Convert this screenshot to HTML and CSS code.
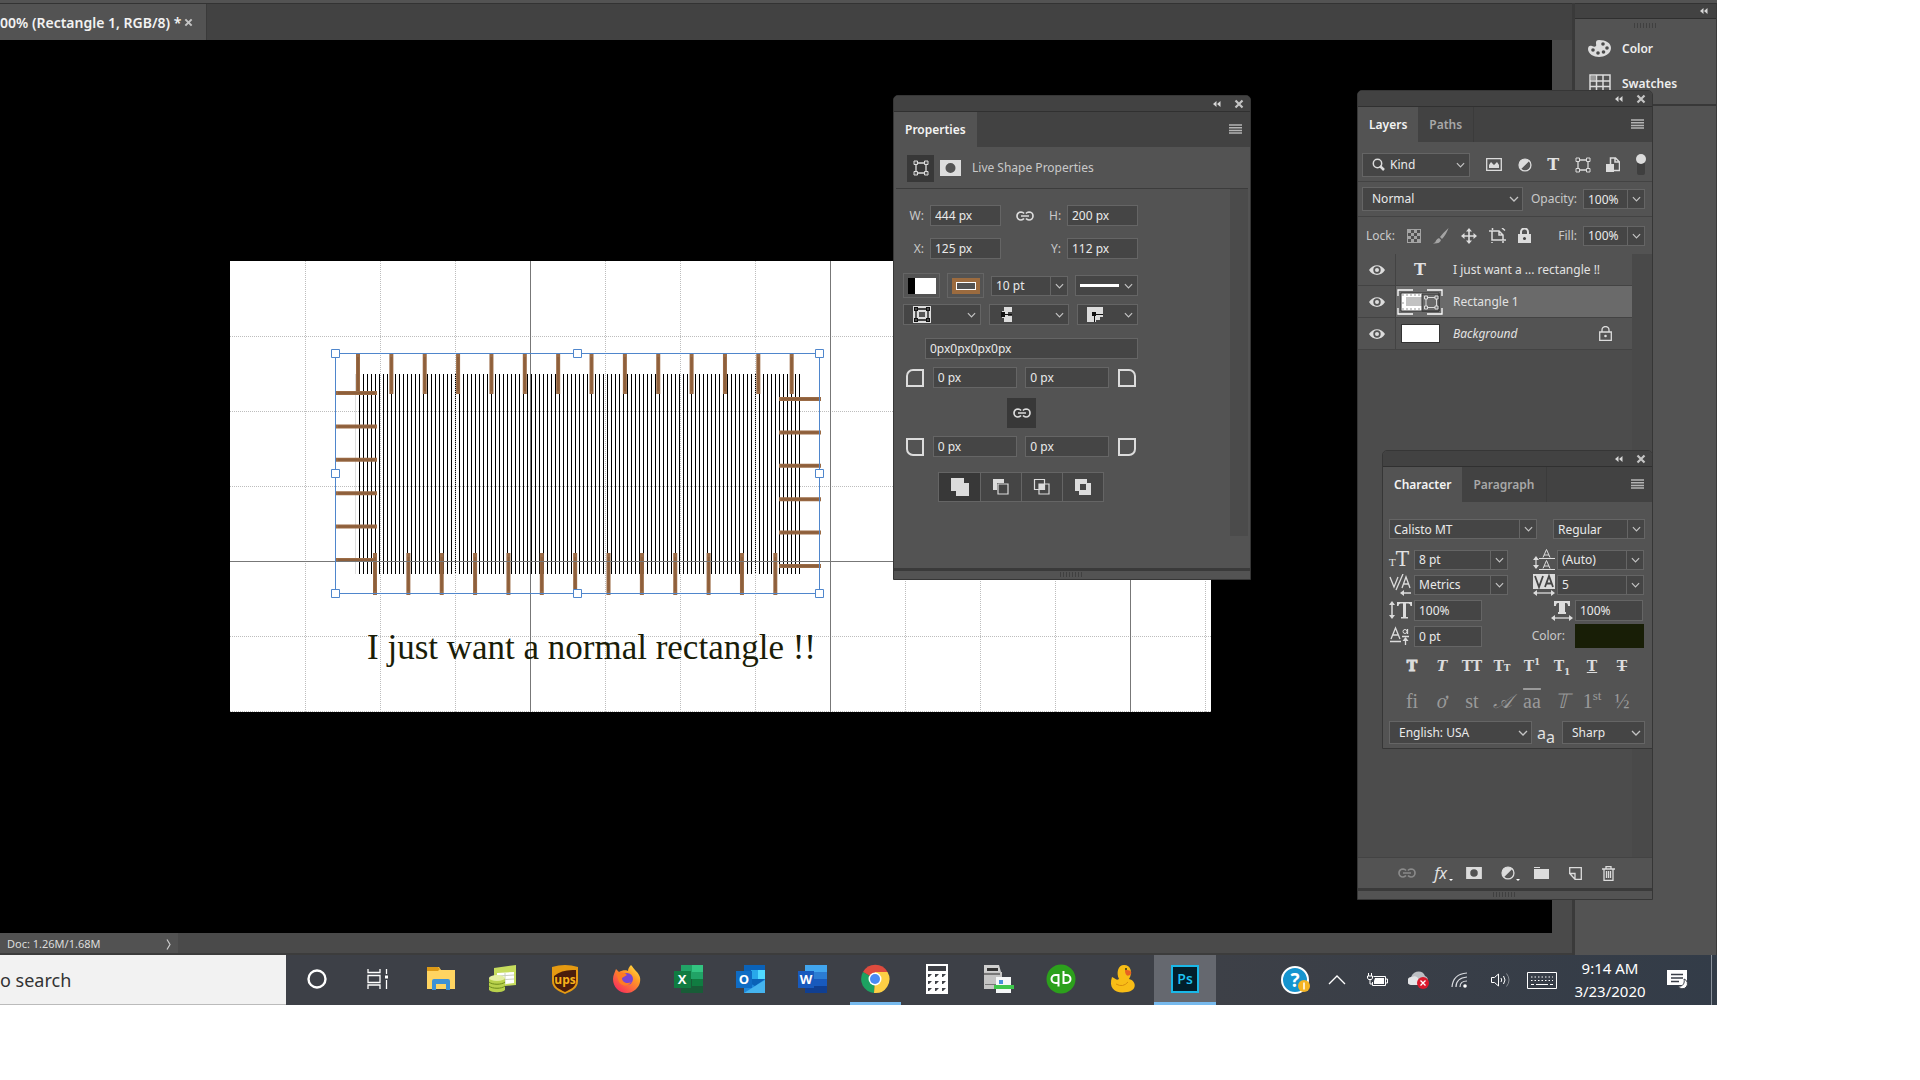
FILE: index.html
```html
<!DOCTYPE html>
<html lang="en">
<head>
<meta charset="utf-8">
<title>Rectangle 1</title>
<link rel="stylesheet" href="styles.css">
</head>
<body>
<svg class="sprite" aria-hidden="true">
  <symbol id="chev" viewBox="0 0 10 6"><path d="M1 1l4 4 4-4" fill="none" stroke="#c4c4c4" stroke-width="1.3"/></symbol>
  <symbol id="collapse" viewBox="0 0 8 6"><path d="M3.5 0v6L0 3zM7.500 0v6L4 3z" fill="#d6d6d6"/></symbol>
  <symbol id="close" viewBox="0 0 10 10"><path d="M1.500 1.500l7 7M8.500 1.500l-7 7" stroke="#c4c4c4" stroke-width="2.200"/></symbol>
  <symbol id="menu" viewBox="0 0 13 10"><path d="M0 1h13M0 3.700h13M0 6.400h13M0 9.100h13" stroke="#b4b4b4" stroke-width="1.500"/></symbol>
  <symbol id="link" viewBox="0 0 18 10"><path d="M8 2.500A4 4 0 0 0 5 1a4 4 0 0 0 0 8 4 4 0 0 0 3-1.500M10 2.500A4 4 0 0 1 13 1a4 4 0 0 1 0 8 4 4 0 0 1-3-1.500M5 5h8" fill="none" stroke="currentColor" stroke-width="1.700"/></symbol>
  <symbol id="shape" viewBox="0 0 16 16"><path d="M3 3h10v10H3z" fill="none" stroke="currentColor" stroke-width="1.300"/><path d="M1 1h3.500v3.500H1zM11.500 1H15v3.500h-3.500zM1 11.500h3.500V15H1zM11.500 11.500H15V15h-3.500z" fill="#535353" stroke="currentColor"/></symbol>
  <symbol id="mask" viewBox="0 0 21 16"><path fill-rule="evenodd" d="M0 0h21v16H0zM10.500 3a5 5 0 1 0 0 10 5 5 0 0 0 0-10z" fill="#dcdcdc"/></symbol>
  <symbol id="half" viewBox="0 0 14 14"><circle cx="7" cy="7" r="6" fill="#dcdcdc"/><path d="M11 3.200L3.200 11a5.200 5.200 0 0 0 7.800-7.800z" fill="#555"/><circle cx="7" cy="7" r="6" fill="none" stroke="#dcdcdc" stroke-width="1.200"/></symbol>
  <symbol id="eye" viewBox="0 0 16 10"><path fill-rule="evenodd" d="M0 5c4-6.500 12-6.500 16 0-4 6.500-12 6.500-16 0zM8 1.300a3.700 3.700 0 1 0 0 7.400 3.700 3.700 0 0 0 0-7.400z" fill="#dcdcdc"/><circle cx="8" cy="5" r="2" fill="#dcdcdc"/></symbol>
</svg>

<div class="desktop">
  <div class="app">
    <main class="document">
      <div class="tabbar">
        <div class="doc-tab"><span>00% (Rectangle 1, RGB/8) *</span><button class="bare" aria-label="Close document"><svg width="9" height="9"><use href="#close"/></svg></button></div>
      </div>
      <div class="stage">
        <div class="canvas">
          <svg class="artboard" width="981" height="451" viewBox="230 261 981 451">
            <path fill="#fff" d="M230 261h981v451H230z"/>
            <path d="M355.500 374v200" stroke="#ddd"/>
            <path d="M359 474h442" stroke="#000" stroke-width="200" stroke-dasharray="1 3"/>
            <g stroke="#9b6b45" fill="none">
              <path d="M356 374h438" stroke-width="40" stroke-dasharray="4 29.360"/>
              <path d="M373 574h406" stroke-width="42" stroke-dasharray="4 29.360"/>
              <path d="M356.500 391v172" stroke-width="41" stroke-dasharray="4 29.400"/>
              <path d="M800 397v172" stroke-width="42" stroke-dasharray="4 29.400"/>
            </g>
            <g stroke="#6f4526" fill="none" opacity=".3">
              <path d="M357 374h438" stroke-width="34" stroke-dasharray="2 31.360"/>
              <path d="M374 574h406" stroke-width="34" stroke-dasharray="2 31.360"/>
              <path d="M356.500 392v172" stroke-width="37" stroke-dasharray="2 31.400"/>
              <path d="M800 398v172" stroke-width="37" stroke-dasharray="2 31.400"/>
            </g>
            <path d="M305.500 261v451M380.500 261v451M455.500 261v451M605.500 261v451M680.500 261v451M755.500 261v451M905.500 261v451M980.500 261v451M1055.500 261v451M1205.500 261v451M230 336.500h981M230 411.500h981M230 486.500h981M230 636.500h981M230 711.500h981" stroke="#bdbdbd" stroke-dasharray="1 1"/>
            <path d="M530.500 261v451M830.500 261v451M1130.500 261v451M230 561.500h981" stroke="#777"/>
            <text class="art-text" x="367" y="659">I just want a normal rectangle !!</text>
            <path d="M335.500 353.500h484v240h-484z" fill="none" stroke="#4f86cc"/>
            <path d="M331.500 349.500h8v8h-8zM573.500 349.500h8v8h-8zM815.500 349.500h8v8h-8zM331.500 469.500h8v8h-8zM815.500 469.500h8v8h-8zM331.500 589.500h8v8h-8zM573.500 589.500h8v8h-8zM815.500 589.500h8v8h-8z" fill="#fff" stroke="#4f86cc"/>
          </svg>
        </div>
        <div class="vscroll"></div>
      </div>
      <div class="status">
        <div class="doc-size"><span>Doc: 1.26M/1.68M</span><svg width="5" height="11" viewBox="0 0 5 11"><path d="M1 .5l3 5-3 5" fill="none" stroke="#ccc" stroke-width="1.200"/></svg></div>
      </div>
    </main>
    <aside class="dock">
      <div class="dock-head"><svg width="8" height="6"><use href="#collapse"/></svg></div>
      <div class="dock-list">
        <i class="grip"></i>
        <button class="dock-item"><svg width="23" height="17" viewBox="0 0 23 17"><path d="M11 0c7 0 12 3 12 8 0 6-7 9-12 9S0 14 0 9c0-3 2-4 4-3s3 1 4 0-2-6 3-6z" fill="#dcdcdc"/><g fill="#4a4a4a"><circle cx="5" cy="10" r="1.800"/><circle cx="10" cy="13" r="1.800"/><circle cx="15.500" cy="12" r="1.800"/><circle cx="19" cy="8" r="1.800"/><circle cx="15" cy="4" r="1.800"/></g></svg>Color</button>
        <button class="dock-item"><svg width="23" height="19" viewBox="0 0 23 19"><path d="M2 1h20v17H2zM8.500 1v17M15 1v17M2 7h20M2 12.500h20" fill="none" stroke="#dcdcdc" stroke-width="1.500"/><path d="M3 2h5v4H3z" fill="#999"/></svg>Swatches</button>
      </div>
    </aside>
  </div>

  <footer class="taskbar">
    <input class="search" type="text" value="o search" aria-label="Search">
    <nav class="tasks">
      <button aria-label="Cortana"><svg width="30" height="30" viewBox="0 0 30 30"><circle cx="15" cy="15" r="8.500" fill="none" stroke="#fff" stroke-width="2.400"/></svg></button>
      <button aria-label="Task view"><svg width="30" height="30" viewBox="0 0 30 30"><path d="M4 5v3.500h12V5M4 25v-4h12v4M4 11.500h12v7H4zM22.500 5v5M22.500 16v9" fill="none" stroke="#fff" stroke-width="1.300"/><path d="M21 11.500h3v3h-3z" fill="#fff"/></svg></button>
      <button aria-label="File Explorer"><svg width="30" height="30" viewBox="0 0 30 30"><path d="M1 3h12l2 3h14v19H1z" fill="#ffd461"/><path d="M1 3h11l2 2-2 2H1z" fill="#dd9a17"/><path d="M6 26V17q0-2 2-2h14q2 0 2 2v9h-4v-6H10v6z" fill="#3d91d6"/></svg></button>
      <button aria-label="Database"><svg width="30" height="30" viewBox="0 0 30 30"><path d="M6 4l22-3v20l-22 2z" fill="#c6dc5d"/><path d="M9 9l17-1v11l-17 2z" fill="#fff"/><path d="M9 12l17-1M9 16l17-1M17 9v12" stroke="#c9cfbc"/><path d="M1 14v12c3 3 13 3 16 0V14z" fill="#b9d14c"/><ellipse cx="9" cy="14" rx="8" ry="3" fill="#e4efa2"/><path d="M1 18c3 3 13 3 16 0M1 22c3 3 13 3 16 0" fill="none" stroke="#6d8b1c"/></svg></button>
      <button aria-label="UPS"><svg width="30" height="30" viewBox="0 0 30 30"><path d="M2 3q13-4 26 0v14c0 7-6 10-13 13C8 27 2 24 2 17z" fill="#e59a12"/><path d="M4 12Q12 5 26 6v11c0 6-5 8-11 11C9 25 4 23 4 17z" fill="#4a1d0c"/><text x="15" y="20" text-anchor="middle" class="ico ups">ups</text></svg></button>
      <button aria-label="Firefox"><svg width="30" height="30" viewBox="0 0 30 30"><defs><linearGradient id="ff" x1="1" y1="0" x2=".2" y2="1"><stop offset="0" stop-color="#fff04a"/><stop offset=".4" stop-color="#ff9a25"/><stop offset="1" stop-color="#f7285d"/></linearGradient></defs><path d="M19 1c2 2 3 4 4 5 4 4 6 7 5 12-1 6-7 11-13 11C7 29 1 23 1 15c0-4 2-7 3-10l3 3c3-2 8-2 9-1 0-2 1-4 3-6z" fill="url(#ff)"/><circle cx="15" cy="15" r="6" fill="#7a45d1"/><path d="M4 8c4 0 8 0 11 3l-5 3c0 5 6 6 9 4-3 6-12 4-13-3z" fill="#ff7b24"/></svg></button>
      <button aria-label="Excel"><svg width="30" height="30" viewBox="0 0 30 30"><path d="M7 1h22v28H7z" fill="#21a366"/><path d="M18 1h11v7H18z" fill="#33c481"/><path d="M7 15h11v14H7z" fill="#185c37"/><path d="M18 15h11v7H18z" fill="#107c41"/><path d="M18 22h11v7H18z" fill="#185c37"/><path d="M0 7h17v17H0z" fill="#107c41"/><text x="8" y="20" text-anchor="middle" class="ico letter">X</text></svg></button>
      <button aria-label="Outlook"><svg width="30" height="30" viewBox="0 0 30 30"><path d="M8 1h21v26H8z" fill="#0a62b8"/><path d="M15 6h7v9h-7z" fill="#28a8ea"/><path d="M22 6h7v9h-7z" fill="#50d9ff"/><path d="M8 16l11 6 10-7v14H8z" fill="#1d87da"/><path d="M8 29l21-13v13z" fill="#45b4ef"/><path d="M0 7h16v17H0z" fill="#0f6cc4"/><text x="8" y="20" text-anchor="middle" class="ico letter">O</text></svg></button>
      <button aria-label="Word"><svg width="30" height="30" viewBox="0 0 30 30"><path d="M7 1h22v7H7z" fill="#41a5ee"/><path d="M7 8h22v7H7z" fill="#2b7cd3"/><path d="M7 15h22v7H7z" fill="#185abd"/><path d="M7 22h22v7H7z" fill="#103f91"/><path d="M0 7h16v17H0z" fill="#185abd"/><text x="8" y="20" text-anchor="middle" class="ico letter">W</text></svg></button>
      <button class="running" aria-label="Chrome"><svg width="30" height="30" viewBox="0 0 30 30"><path d="M15 15L3 8a14 14 0 0 1 24.500 0z" fill="#dd4b3e"/><path d="M15 15L3 8a14 14 0 0 0 11 21z" fill="#1da261"/><path d="M15 15l-1 14A14 14 0 0 0 27.500 8H15z" fill="#fdcf45"/><circle cx="15" cy="15" r="6.500" fill="#fff"/><circle cx="15" cy="15" r="5" fill="#4a8af4"/></svg></button>
      <button aria-label="Calculator"><svg width="30" height="30" viewBox="0 0 30 30"><path d="M4 0h22v30H4z" fill="#fff"/><path d="M6 2h18v5H6zM6 10h4l-3 3H6zM13 10h4l-3 3h-1zM20 10h4l-3 3h-1zM6 17h4l-3 3H6zM13 17h4l-3 3h-1zM20 17h4l-3 3h-1zM6 24h4l-3 3H6zM13 24h4l-3 3h-1zM20 24h4l-3 3h-1z" fill="#3e4046"/></svg></button>
      <button aria-label="Scanner"><svg width="30" height="30" viewBox="0 0 30 30"><path d="M0 1h15l2 7H0z" fill="#cfcfcf"/><path d="M3 4h11v3H3z" fill="#333"/><path d="M0 8h18v17H0z" fill="#c4c4c4"/><path d="M0 9h16v2H0zM1 20h12v1H1z" fill="#777"/><path d="M12 13h15v16H12z" fill="#f4f6f7"/><path d="M15 16h4v4h-4z" fill="#4690d8"/><path d="M10 21h20v4H10z" fill="#3fc74c"/></svg></button>
      <button aria-label="QuickBooks"><svg width="30" height="30" viewBox="0 0 30 30"><circle cx="15" cy="15" r="14.500" fill="#2ca01c"/><path d="M12.500 22.500V11H9.500a4 4 0 0 0 0 8h2M17.500 7v12H20.500a4 4 0 0 0 0-8h-2" fill="none" stroke="#fff" stroke-width="2"/></svg></button>
      <button aria-label="Cyberduck"><svg width="30" height="30" viewBox="0 0 30 30"><path d="M4 13c3 1 4 4 7 2-3-6-1-14 5-14 7 0 9 8 5 14 8 2 8 12-2 13-11 2-19-3-15-15z" fill="#f8bd16"/><path d="M17 6c5 0 7 1 6 4-3 3-6 2-6-4z" fill="#e66122"/><circle cx="18" cy="5" r="1" fill="#331"/><path d="M8 20q7 4 12-2" fill="none" stroke="#d88d0c"/></svg></button>
      <button class="current" aria-label="Photoshop"><svg width="30" height="30" viewBox="0 0 30 30"><path d="M2 2h26v26H2z" fill="#021e2b" stroke="#1ab8e8" stroke-width="2"/><text x="15" y="20" text-anchor="middle" class="ico ps">Ps</text></svg></button>
    </nav>
    <div class="tray">
      <button aria-label="Help"><svg width="30" height="28" viewBox="0 0 30 28"><circle cx="14" cy="14" r="13" fill="#1594cf" stroke="#fff" stroke-width="2"/><text x="14" y="21" text-anchor="middle" class="ico help">?</text><circle cx="23" cy="20" r="6" fill="#f4b424"/><path d="M23 16.500v7" stroke="#fff" stroke-width="1.500"/></svg></button>
      <button aria-label="Show hidden icons"><svg width="18" height="10" viewBox="0 0 18 10"><path d="M1 9l8-8 8 8" fill="none" stroke="#fff" stroke-width="1.300"/></svg></button>
      <button aria-label="Battery"><svg width="21" height="14" viewBox="0 0 21 14"><path d="M6.500 3.500h12v9h-13V9M19 6h1.500v4H19" fill="none" stroke="#fff"/><path d="M8 5h9v6H7V8z" fill="#fff"/><path d="M1.500 0v3M4.500 0v3M.5 3h5v2l-1 1.500h-3L.5 5zM3 7v4h2" fill="none" stroke="#fff"/></svg></button>
      <button aria-label="OneDrive"><svg width="22" height="18" viewBox="0 0 22 18"><path d="M3 14a5 5 0 0 1 0-8C6-1 15-1 17 5c4 1 4 8 0 9z" fill="#bcbfc3"/><path d="M3 14a4 4 0 0 1 1-8c3-2 6 0 7 3l6 5z" fill="#e4e5e7"/><circle cx="15" cy="12" r="6" fill="#d9192b"/><path d="M12.500 9.500l5 5M17.500 9.500l-5 5" stroke="#fff" stroke-width="1.300"/></svg></button>
      <button aria-label="Wi-Fi"><svg width="18" height="17" viewBox="0 0 18 17"><path d="M1 15Q2 2 16 1M5 15Q5 6 16 5M9 15q0-6 7-6" fill="none" stroke="#dadce0" stroke-width="1.200"/><circle cx="14" cy="14" r="1.800" fill="#fff"/></svg></button>
      <button aria-label="Volume"><svg width="20" height="16" viewBox="0 0 20 16"><path d="M.5 5.500h3L7.500 2v12l-4-3.500h-3zM10 6q1.500 2 0 4M12.500 4q3 4 0 8" fill="none" stroke="#fff"/><path d="M15.500 1.500q5 6.500 0 13" fill="none" stroke="#888c92"/></svg></button>
      <button aria-label="Touch keyboard"><svg width="30" height="17" viewBox="0 0 30 17"><path d="M.5.5h29v16H.5z" fill="none" stroke="#fff"/><path d="M4 5h22M4 8.500h22" stroke="#fff" stroke-dasharray="1.500 2"/><path d="M4 12.500h3M9 12.500h12M23 12.500h3" stroke="#fff"/></svg></button>
      <div class="clock"><span>9:14 AM</span><span>3/23/2020</span></div>
      <button class="action" aria-label="Action center"><svg width="21" height="20" viewBox="0 0 21 20"><path d="M0 0h20v15H5l-5 0z" fill="#fff"/><path d="M4 4.500h12M4 8h12M4 11.500h8" stroke="#3a3f48" stroke-width="1.400"/><path d="M17 9a5 5 0 1 1-6 7c5 1 7-3 6-7z" fill="#fff" stroke="#3a3f48"/></svg></button>
      <i class="peek"></i>
    </div>
  </footer>

  <section class="panel properties">
    <div class="panel-head"><svg width="8" height="6"><use href="#collapse"/></svg><button class="bare" aria-label="Close"><svg width="10" height="10"><use href="#close"/></svg></button></div>
    <div class="panel-tabs"><button class="on">Properties</button><svg class="menu" width="13" height="10"><use href="#menu"/></svg></div>
    <div class="prop-title"><button class="pressed" aria-label="Shape"><svg width="16" height="16"><use href="#shape"/></svg></button><svg width="21" height="16"><use href="#mask"/></svg><span>Live Shape Properties</span></div>
    <div class="prop-body">
      <div class="fields">
        <div class="dims">
          <label for="w">W:</label><input id="w" value="444 px"><svg class="lit" width="18" height="10"><use href="#link"/></svg><label for="h">H:</label><input id="h" value="200 px">
          <label for="x">X:</label><input id="x" value="125 px"><i></i><label for="y">Y:</label><input id="y" value="112 px">
        </div>
        <div class="strokes">
          <button class="paint" aria-label="Fill"><i class="fill"></i></button>
          <button class="paint" aria-label="Stroke"><i class="stroke"><b></b></i></button>
          <div class="combo size"><input value="10 pt" aria-label="Stroke width"><button aria-label="Widths"><svg width="9" height="6"><use href="#chev"/></svg></button></div>
          <button class="drop line" aria-label="Stroke type"><i></i><svg width="9" height="6"><use href="#chev"/></svg></button>
        </div>
        <div class="caps">
          <button class="drop" aria-label="Align"><svg width="18" height="17" viewBox="0 0 18 17"><path d="M0 0h18v17H0z" fill="#dcdcdc"/><path d="M3 3h12v11H3z" fill="none" stroke="#111" stroke-width="1.300"/><path d="M1 1h4v4H1zM13 1h4v4h-4zM1 12h4v4H1zM13 12h4v4h-4z" fill="#111"/><path d="M2.500 2.500h1v1h-1zM14.500 2.500h1v1h-1zM2.500 13.500h1v1h-1zM14.500 13.500h1v1h-1z" fill="#fff"/><path d="M6 6h6v5H6z" fill="#555"/></svg><svg width="9" height="6"><use href="#chev"/></svg></button>
          <button class="drop" aria-label="Caps"><svg width="14" height="15" viewBox="0 0 14 15"><path d="M5 0h8v5H9v4h4v6H5v-4H3V4h2z" fill="#dcdcdc"/><path d="M2 5h4v5H2zM6 7h7v1H6z" fill="#111"/></svg><svg width="9" height="6"><use href="#chev"/></svg></button>
          <button class="drop" aria-label="Corners"><svg width="16" height="15" viewBox="0 0 16 15"><path d="M0 0h16v10h-3v3H9v2H0z" fill="#dcdcdc"/><path d="M5 5h4v4H5zM7 7h9v1H7zM7 7h1v8H7z" fill="#111"/></svg><svg width="9" height="6"><use href="#chev"/></svg></button>
        </div>
        <input class="radii" value="0px0px0px0px" aria-label="Corner radii">
        <div class="corners first"><i class="tl"></i><input value="0 px" aria-label="Top left"><input value="0 px" aria-label="Top right"><i class="tr"></i></div>
        <button class="pressed chain lit" aria-label="Link radii"><svg width="18" height="10"><use href="#link"/></svg></button>
        <div class="corners"><i class="bl"></i><input value="0 px" aria-label="Bottom left"><input value="0 px" aria-label="Bottom right"><i class="br"></i></div>
        <div class="ops">
          <button class="on" aria-label="Combine"><svg width="18" height="18" viewBox="0 0 18 18"><path d="M0 0h13v5h5v13H5v-5H0z" fill="#dcdcdc"/></svg></button>
          <button aria-label="Subtract"><svg width="18" height="18" viewBox="0 0 18 18"><path d="M1 1h11v4H5v7H1z" fill="#dcdcdc"/><path d="M6 6h10v10H6z" fill="none" stroke="#dcdcdc" stroke-width="1.200"/></svg></button>
          <button aria-label="Intersect"><svg width="18" height="18" viewBox="0 0 18 18"><path d="M1.500 1.500h10v10h-10zM6 6h10v10H6z" fill="none" stroke="#dcdcdc" stroke-width="1.200"/><path d="M6 6h6v6H6z" fill="#dcdcdc"/></svg></button>
          <button aria-label="Exclude"><svg width="18" height="18" viewBox="0 0 18 18"><path fill-rule="evenodd" d="M1 1h12v4h4v12H5v-4H1zM6 6v6h6V6z" fill="#dcdcdc"/></svg></button>
        </div>
      </div>
      <div class="pscroll"></div>
    </div>
    <div class="panel-foot"><i class="grip"></i></div>
  </section>

  <section class="panel layers">
    <div class="panel-head"><svg width="8" height="6"><use href="#collapse"/></svg><button class="bare" aria-label="Close"><svg width="10" height="10"><use href="#close"/></svg></button></div>
    <div class="panel-tabs"><button class="on">Layers</button><button>Paths</button><svg class="menu" width="13" height="10"><use href="#menu"/></svg></div>
    <div class="filter">
      <button class="drop kind"><svg width="13" height="13" viewBox="0 0 13 13"><circle cx="5.500" cy="5.500" r="4.200" fill="none" stroke="#dcdcdc" stroke-width="1.500"/><path d="M8 8l4 4" stroke="#dcdcdc" stroke-width="2.500"/></svg><span>Kind</span><svg width="9" height="6"><use href="#chev"/></svg></button>
      <div class="filter-icons">
        <svg width="16" height="13" viewBox="0 0 16 13"><path d="M.7.7h14.600v11.600H.7z" fill="none" stroke="#dcdcdc" stroke-width="1.300"/><path d="M3 10V7l2-3 3 3 3-3 2 3v3z" fill="#dcdcdc"/></svg>
        <svg width="14" height="14"><use href="#half"/></svg>
        <b class="serif">T</b>
        <svg class="lit" width="16" height="16"><use href="#shape"/></svg>
        <svg width="14" height="15" viewBox="0 0 14 15"><path d="M4.500 7V1h5l4 4v8.500H8M9 1v4h4" fill="none" stroke="#dcdcdc" stroke-width="1.500"/><path d="M0 7h8v8H0z" fill="#dcdcdc"/></svg>
        <svg width="10" height="22" viewBox="0 0 10 22"><path d="M1 4h8v15q0 2-2 2H3q-2 0-2-2z" fill="#3f3f3f"/><circle cx="5" cy="5" r="5" fill="#dcdcdc"/></svg>
      </div>
    </div>
    <div class="blend">
      <select aria-label="Blend mode"><option>Normal</option></select>
      <label for="op">Opacity:</label><div class="combo pct"><input id="op" value="100%"><button aria-label="Opacity slider"><svg width="9" height="6"><use href="#chev"/></svg></button></div>
    </div>
    <div class="lock">
      <span>Lock:</span>
      <div class="lock-icons">
        <svg width="14" height="14" viewBox="0 0 14 14"><path d="M0 0h14v14H0z" fill="#a4a4a4"/><path d="M4 1h3v3H4zM10 1h3v3h-3zM1 4h3v3H1zM7 4h3v3H7zM4 7h3v3H4zM10 7h3v3h-3zM1 10h3v3H1zM7 10h3v3H7z" fill="#505050"/></svg>
        <svg width="16" height="16" viewBox="0 0 16 16"><path d="M15.500 0Q10 5 7 9l2 2q4-4 6.500-11zM6 10l2 2q-1 4-8 3.500 3-1 3-3 1-2 3-2.500z" fill="#a4a4a4"/></svg>
        <svg width="16" height="16" viewBox="0 0 16 16"><path d="M8 2v12M2 8h12" stroke="#dcdcdc" stroke-width="1.600"/><path d="M8 0l3 3.500H5zM8 16l3-3.500H5zM0 8l3.500-3v6zM16 8l-3.500-3v6z" fill="#dcdcdc"/></svg>
        <svg width="17" height="15" viewBox="0 0 17 15"><path d="M3.500 0v2M0 3h10l4 4v5M3 3v9h14M14 13v2M3 14v1M10 3v4h4M13 0l3 2.500" fill="none" stroke="#dcdcdc" stroke-width="1.500"/></svg>
        <svg width="13" height="15" viewBox="0 0 13 15"><path d="M3 7V4a3.500 3.500 0 0 1 7 0v3" fill="none" stroke="#dcdcdc" stroke-width="2"/><path d="M0 6h13v9H0z" fill="#dcdcdc"/><circle cx="6.500" cy="10.500" r="1.500" fill="#444"/></svg>
      </div>
      <label for="fl">Fill:</label><div class="combo pct"><input id="fl" value="100%"><button aria-label="Fill slider"><svg width="9" height="6"><use href="#chev"/></svg></button></div>
    </div>
    <div class="layer-area">
      <div class="layer-list">
        <div class="layer"><div class="vis"><svg width="16" height="10"><use href="#eye"/></svg></div><div class="thumb"><b class="serif">T</b></div><span>I just want a ... rectangle !!</span></div>
        <div class="layer sel"><div class="vis"><svg width="16" height="10"><use href="#eye"/></svg></div><div class="thumb"><svg width="46" height="26" viewBox="0 0 46 26"><path d="M1 7V1h15M30 1h15v6M1 19v6h15M30 25h15v-6" fill="none" stroke="#fff" stroke-width="1.300"/><path d="M4 4h38v18H4z" fill="#fff" stroke="#333"/><path d="M5 6h20M5 14h20M5 20h20" stroke="#ccc" stroke-width="2" stroke-dasharray="2 2"/><path d="M9 8h16v9H9z" fill="#c2c2c2"/><path d="M25 5h17v17H25z" fill="#6a6a6a" stroke="#333"/><path d="M29 8.500h10.500v10H29z" fill="none" stroke="#dcdcdc"/><path d="M27.500 7h3v3h-3zM38 7h3v3h-3zM27.500 17h3v3h-3zM38 17h3v3h-3z" fill="#6a6a6a" stroke="#dcdcdc"/></svg></div><span>Rectangle 1</span></div>
        <div class="layer"><div class="vis"><svg width="16" height="10"><use href="#eye"/></svg></div><div class="thumb"><i class="blank"></i></div><em>Background</em><svg width="13" height="15" viewBox="0 0 13 15"><path d="M3 6V4a3.500 3.500 0 0 1 7 0v2M.7 6h11.600v8.300H.7z" fill="none" stroke="#dcdcdc" stroke-width="1.300"/><circle cx="6.500" cy="10" r="1.300" fill="#dcdcdc"/></svg></div>
      </div>
      <div class="lscroll"></div>
    </div>
    <div class="layer-tools">
      <button class="dim" aria-label="Link layers"><svg width="18" height="10"><use href="#link"/></svg></button>
      <button class="fx" aria-label="Effects">fx<i class="dot"></i></button>
      <button aria-label="Mask"><svg width="16" height="12"><use href="#mask"/></svg></button>
      <button aria-label="Adjustment"><svg width="14" height="14"><use href="#half"/></svg><i class="dot"></i></button>
      <button aria-label="Group"><svg width="15" height="12" viewBox="0 0 15 12"><path d="M0 0h6v1H0zM0 2h15v10H0z" fill="#dcdcdc"/></svg></button>
      <button aria-label="New layer"><svg width="13" height="13" viewBox="0 0 13 13"><path d="M.7 7V.7h11.600v11.600H6" fill="none" stroke="#dcdcdc" stroke-width="1.300"/><path d="M.7 6.500H6v5.800z" fill="none" stroke="#dcdcdc" stroke-width="1.300"/></svg></button>
      <button aria-label="Delete"><svg width="13" height="15" viewBox="0 0 13 15"><path d="M0 3h13M4 2.500V.7h5v1.800M2 3v11.300h9V3M4.500 5v7M6.500 5v7M8.500 5v7" fill="none" stroke="#dcdcdc" stroke-width="1.300"/></svg></button>
    </div>
    <div class="panel-foot"><i class="grip"></i></div>
  </section>

  <section class="panel character">
    <div class="panel-head"><svg width="8" height="6"><use href="#collapse"/></svg><button class="bare" aria-label="Close"><svg width="10" height="10"><use href="#close"/></svg></button></div>
    <div class="panel-tabs"><button class="on">Character</button><button>Paragraph</button><svg class="menu" width="13" height="10"><use href="#menu"/></svg></div>
    <div class="char-body">
      <div class="font-row">
        <div class="combo"><input value="Calisto MT" aria-label="Font"><button aria-label="Fonts"><svg width="9" height="6"><use href="#chev"/></svg></button></div>
        <div class="combo"><input value="Regular" aria-label="Style"><button aria-label="Styles"><svg width="9" height="6"><use href="#chev"/></svg></button></div>
      </div>
      <div class="metric-row">
        <span class="sym"><small class="serif">T</small><span class="serif big">T</span></span>
        <div class="combo"><input value="8 pt" aria-label="Size"><button aria-label="Sizes"><svg width="9" height="6"><use href="#chev"/></svg></button></div>
        <svg width="22" height="22" viewBox="0 0 22 22"><path d="M3 9v10M6 9.500h16M6 20.500h16" stroke="#dcdcdc" stroke-width="1.200"/><path d="M3 7l3 4H0zM3 20l3-4H0z" fill="#dcdcdc"/><path d="M10 8.500L13.500.5l3.500 8M11 6h5M10 19.500l3.500-8 3.500 8M11 17h5" fill="none" stroke="#dcdcdc"/></svg>
        <div class="combo"><input value="(Auto)" aria-label="Leading"><button aria-label="Leadings"><svg width="9" height="6"><use href="#chev"/></svg></button></div>
      </div>
      <div class="metric-row">
        <svg width="23" height="22" viewBox="0 0 23 22"><path d="M1 3l4 10L9 3M14 0L7 16M13 14l4-11 4 11M14 10h6" fill="none" stroke="#dcdcdc" stroke-width="1.300"/><path d="M13 19h9" stroke="#dcdcdc" stroke-width="1.500"/><path d="M11 19l4-3v6z" fill="#dcdcdc"/></svg>
        <div class="combo"><input value="Metrics" aria-label="Kerning"><button aria-label="Kernings"><svg width="9" height="6"><use href="#chev"/></svg></button></div>
        <svg width="22" height="22" viewBox="0 0 22 22"><path d="M0 0h22v15H0z" fill="#dcdcdc"/><path d="M2 2l4 11 4-11M12 13l4-11 4 11M13 9.500h6" fill="none" stroke="#444" stroke-width="1.800"/><path d="M3 19h16" stroke="#dcdcdc" stroke-width="1.300"/><path d="M0 19l4-3v6zM22 19l-4-3v6z" fill="#dcdcdc"/></svg>
        <div class="combo"><input value="5" aria-label="Tracking"><button aria-label="Trackings"><svg width="9" height="6"><use href="#chev"/></svg></button></div>
      </div>
      <div class="metric-row scale">
        <svg width="23" height="20" viewBox="0 0 23 20"><path d="M3 4v12" stroke="#dcdcdc" stroke-width="1.500"/><path d="M3 1l3 4H0zM3 19l3-4H0zM8 2h15v4h-1.500q0-2.500-2-2.500H17V17h2v1.500h-7V17h2V3.500h-2.500q-2 0-2 2.500H8z" fill="#dcdcdc"/></svg>
        <input value="100%" aria-label="Vertical scale">
        <svg width="22" height="21" viewBox="0 0 22 21"><path d="M3 1h16v5h-2q0-3-2-3h-1v9h1v2H7v-2h1V3H7Q5 3 5 6H3z" fill="#dcdcdc"/><path d="M3 18h16" stroke="#dcdcdc" stroke-width="1.300"/><path d="M0 18l4-3v6zM22 18l-4-3v6z" fill="#dcdcdc"/></svg>
        <input value="100%" aria-label="Horizontal scale">
      </div>
      <div class="metric-row scale">
        <svg width="23" height="20" viewBox="0 0 23 20"><path d="M2 13L6.500 2 11 13M3.500 9h6M1 15.500h11M13 10.500h7" fill="none" stroke="#dcdcdc" stroke-width="1.300"/><circle cx="16" cy="5.500" r="2" fill="none" stroke="#dcdcdc"/><path d="M18.500 3v5M16.500 13v6" stroke="#dcdcdc" stroke-width="1.300"/><path d="M16.500 11l3 4h-6z" fill="#dcdcdc"/></svg>
        <input value="0 pt" aria-label="Baseline shift">
        <label for="tc">Color:</label>
        <button id="tc" class="swatch" aria-label="Text color"></button>
      </div>
      <div class="glyphs"><button><b class="heavy">T</b></button><button><em>T</em></button><button>TT</button><button>T<small>T</small></button><button>T<sup>1</sup></button><button>T<sub>1</sub></button><button><u>T</u></button><button><s>T</s></button></div>
      <div class="glyphs off"><button>fi</button><button><em>ơ</em></button><button>st</button><button><em>𝒜</em></button><button><span class="over">aa</span></button><button><em>𝕋</em></button><button>1<sup>st</sup></button><button>½</button></div>
      <div class="lang-row"><select aria-label="Language"><option>English: USA</option></select><span class="aa"><span>a</span><sub>a</sub></span><select aria-label="Anti-aliasing"><option>Sharp</option></select></div>
    </div>
  </section>
</div>
</body>
</html>
```
FILE: styles.css
```css
* { box-sizing: border-box; }
body { margin: 0; background: #fff; color: #e2e2e2; font: 12px/16px "Noto Sans", "Open Sans", sans-serif; }
button, input, select { font: inherit; color: inherit; border: 0; border-radius: 0; padding: 0; margin: 0; background: none; min-width: 0; outline: 0; }
svg { display: block; flex: none; }
.sprite { display: none; }
button { display: flex; align-items: center; justify-content: center; }
.serif { font-family: "DejaVu Serif", serif; }
.lit { color: #dcdcdc; }

.desktop { position: relative; display: flex; flex-direction: column; height: calc(100vh - 75px); min-height: 930px; margin-right: 203px; overflow: hidden; }
.app { flex: 1; display: flex; min-height: 0; border-top: 3px solid #535353; background: #535353; }
.document { flex: 1; display: flex; flex-direction: column; min-width: 0; border-right: 3px solid #3a3a3a; }
.tabbar { height: 37px; display: flex; background: #424242; border-top: 1px solid #333; }
.doc-tab { width: 207px; display: flex; gap: 3px; padding-top: 11px; background: #535353; border-right: 1px solid #3a3a3a; font-weight: 600; font-size: 14px; color: #f2f2f2; white-space: nowrap; }
.doc-tab button { height: 14px; }
.stage { flex: 1; display: flex; min-height: 0; }
.canvas { flex: 1; background: #000; padding: 221px 0 0 230px; overflow: hidden; }
.art-text { font: 35px "Liberation Serif", serif; fill: #1a1d08; }
.vscroll { width: 20px; background: #4a4a4a; }
.status { height: 22px; background: #4a4a4a; border-bottom: 2px solid #3c3c3c; }
.doc-size { width: 178px; height: 20px; display: flex; align-items: center; justify-content: space-between; padding: 2px 7px 0 7px; background: #525252; font-size: 11px; color: #ddd; }

.dock { width: 142px; border-top: 1px solid #333; border-right: 1px solid #3a3a3a; }
.dock-head { height: 15px; display: flex; align-items: center; justify-content: flex-end; padding-right: 8px; background: #424242; border-bottom: 1px solid #2f2f2f; }
.dock-list { height: 87px; display: flex; flex-direction: column; gap: 16px; padding: 4px 13px 0; border-bottom: 2px solid #383838; }
.dock-item { height: 19px; justify-content: flex-start; gap: 11px; font-weight: 600; color: #eee; }
.grip { display: block; width: 24px; height: 5px; margin: 0 auto; background: repeating-linear-gradient(90deg, #404040 0 1px, #535353 1px 3px); }
.dock .grip { margin-bottom: -5px; }

.taskbar { height: 50px; display: flex; background: #3d4047; }
.search { width: 286px; background: #f2f2f2; color: #333; font-size: 18px; border-bottom: 1px solid #bbb; }
.tasks { display: flex; }
.tasks button { width: 62px; border-bottom: 3px solid transparent; }
.tasks .running { background: linear-gradient(#76b9ed, #76b9ed) center bottom / 51px 3px no-repeat border-box; }
.tasks .current { background: #65686f; border-color: #76b9ed; }
.ico { font-family: "Open Sans", sans-serif; font-weight: 700; fill: #fff; }
.ups { font-size: 12px; fill: #f6b21b; }
.letter { font-size: 13px; }
.ps { font-size: 14px; font-weight: 600; fill: #1ec3f4; }
.help { font-size: 19px; }
.tray { flex: 1; display: flex; align-items: stretch; justify-content: flex-end; background: linear-gradient(90deg, #3d4047, #333c48); }
.tray button { width: 41px; }
.clock { width: 96px; display: flex; flex-direction: column; align-items: center; justify-content: center; font-size: 15px; line-height: 23px; color: #fff; }
.tray .action { width: 38px; }
.peek { width: 1px; margin: 0 5px 0 15px; background: #8b929c; }

.panel { position: absolute; display: flex; flex-direction: column; background: #535353; border: 1px solid #363636; border-radius: 5px 5px 0 0; overflow: hidden; }
.panel-head { height: 16px; flex: none; display: flex; align-items: center; justify-content: flex-end; gap: 13px; padding-right: 6px; background: #424242; border-bottom: 1px solid #303030; }
.panel-tabs { height: 35px; flex: none; display: flex; background: #424242; }
.panel-tabs button { padding: 0 11px; color: #a8a8a8; font-weight: 600; border-right: 1px solid #3b3b3b; }
.panel-tabs .on { background: #535353; color: #f4f4f4; border: 0; }
.menu { margin: 12px 8px 0 auto; }
.panel-foot { height: 11px; flex: none; border-top: 3px solid #3a3a3a; padding-top: 1px; }
.panel input, .panel select, .drop { height: 21px; background: #454545; border: 1px solid #656565; padding: 0 4px; color: #eaeaea; }
.panel select { appearance: none; background: #454545 url("data:image/svg+xml,%3Csvg xmlns='http://www.w3.org/2000/svg' width='10' height='6'%3E%3Cpath d='M1 1l4 4 4-4' fill='none' stroke='%23c4c4c4' stroke-width='1.3'/%3E%3C/svg%3E") no-repeat right 3px center; }
.combo { display: flex; height: 20px; border: 1px solid #656565; background: #454545; }
.panel .combo input { flex: 1; height: 18px; border: 0; background: none; }
.combo button { width: 17px; border-left: 1px solid #656565; }
.drop { justify-content: space-between; }
.pressed { background: #383838; }

.properties { left: 893px; top: 95px; width: 358px; height: 485px; }
.prop-title { height: 42px; flex: none; display: flex; align-items: center; gap: 6px; margin: 0 2px; padding: 1px 0 0 11px; border-bottom: 1px solid #3c3c3c; color: #c9c9c9; }
.prop-title button { width: 27px; height: 27px; color: #dcdcdc; }
.prop-title span { padding-left: 5px; }
.prop-body { flex: 1; display: flex; justify-content: space-between; padding: 0 2px 0 9px; }
.pscroll { width: 18px; margin-bottom: 32px; background: #4b4b4b; }
.fields { width: 235px; padding-top: 16px; display: flex; flex-direction: column; align-items: stretch; }
.dims { display: grid; grid-template-columns: 18px 71px 36px 12px 71px; gap: 12px 6px; align-items: center; justify-content: end; color: #c9c9c9; }
.dims svg { justify-self: center; }
.dims label { text-align: right; white-space: nowrap; }
.panel .dims input { width: 71px; }
.strokes { display: flex; justify-content: space-between; align-items: center; margin-top: 14px; }
.paint { width: 37px; height: 25px; border: 1px solid #656565; }
.paint i { width: 28px; height: 16px; }
.fill { background: linear-gradient(90deg, #000 25%, #fff 25%); }
.stroke { background: #9b6b3f; padding: 4px; }
.stroke b { display: block; height: 8px; border: 1px solid #fff; background: #535353; }
.size { width: 77px; }
.line { width: 63px; }
.line i { width: 39px; height: 3px; background: #fff; }
.caps { display: grid; grid-template-columns: 78px 80px 61px; gap: 8px; margin-top: 6px; }
.caps .drop { padding-left: 9px; }
.panel .radii { width: 213px; margin: 13px 0 8px auto; }
.corners { display: grid; grid-template-columns: 18px 84px 84px 18px; justify-content: space-between; align-items: center; padding: 0 2px 0 3px; }
.corners i { width: 18px; height: 18px; border: 2px solid #dcdcdc; }
.tl { border-top-left-radius: 7px; }
.tr { border-top-right-radius: 7px; }
.bl { border-bottom-left-radius: 7px; }
.br { border-bottom-right-radius: 7px; }
.chain { width: 29px; height: 30px; margin: 10px 0 8px 104px; }
.ops { display: flex; align-self: flex-start; margin: 15px 0 0 35px; border: 1px solid #656565; }
.ops button { width: 41px; height: 28px; background: #454545; border-left: 1px solid #656565; }
.ops .on { background: #383838; border: 0; }

.layers { right: 64px; top: 90px; bottom: 105px; width: 296px; }
.filter { height: 40px; display: flex; align-items: center; gap: 16px; padding: 6px 6px 0 4px; border-bottom: 1px solid #434343; }
.kind { width: 108px; height: 24px; padding: 0 4px 0 9px; gap: 5px; }
.kind span { flex: 1; text-align: left; }
.filter-icons { flex: 1; display: flex; align-items: center; justify-content: space-between; }
.filter-icons b { font-size: 16px; }
.blend, .lock { height: 35px; display: flex; align-items: center; gap: 6px; padding: 0 7px 0 4px; color: #c9c9c9; }
.blend { border-bottom: 1px solid #434343; }
.panel .blend select { width: 161px; height: 24px; padding: 0 9px; }
.blend label, .lock label { margin-left: auto; }
.pct { width: 62px; color: #eee; }
.lock { height: 37px; padding-left: 8px; }
.lock-icons { display: flex; align-items: center; gap: 12px; padding-left: 6px; }
.layer-area { flex: 1; display: flex; background: #4c4c4c; }
.layer-list { flex: 1; }
.lscroll { width: 20px; background: #494949; }
.layer { height: 32px; display: flex; align-items: center; background: #535353; border-bottom: 1px solid #434343; }
.layer > svg { margin: 0 20px 0 auto; }
.vis { width: 38px; height: 100%; display: flex; align-items: center; justify-content: center; background: #535353; border-right: 1px solid #434343; }
.sel { background: #6a6a6a; }
.thumb { width: 57px; display: flex; justify-content: center; padding-right: 9px; }
.thumb b { font-size: 16px; }
.blank { width: 39px; height: 19px; background: #fff; border: 1px solid #333; }
.layer-tools { height: 31px; display: flex; justify-content: space-between; padding: 0 27px 0 33px; border-top: 1px solid #434343; }
.layer-tools button { position: relative; width: 32px; }
.dim { color: #8a8a8a; }
.layer-tools .fx { font: italic 16px/16px "Noto Sans", sans-serif; }
.dot { position: absolute; right: 4px; bottom: 5px; border: 2px solid transparent; border-top-color: #fff; }

.character { right: 64px; top: 450px; width: 271px; }
.char-body { padding: 17px 7px 4px 6px; display: flex; flex-direction: column; }
.font-row { display: grid; grid-template-columns: 148px 92px; justify-content: space-between; margin-bottom: 8px; }
.metric-row { display: grid; grid-template-columns: 23px 94px 45px 87px; column-gap: 2px; align-items: center; height: 25px; }
.metric-row > :nth-child(3) { justify-self: end; }
.scale { grid-template-columns: 23px 68px 89px 68px; height: 26px; }
.scale label { color: #c9c9c9; padding-right: 8px; }
.sym { display: flex; align-items: baseline; }
.sym small { font-size: 10px; }
.big { font-size: 20px; line-height: 20px; }
.swatch { width: 69px; height: 24px; background: #181e06; }
.glyphs { display: flex; height: 24px; margin: 5px 8px 0; font: 700 14px/20px "DejaVu Serif", serif; color: #dcdcdc; }
.glyphs button { flex: 1; display: block; text-align: center; white-space: nowrap; }
.glyphs small, .glyphs sup, .glyphs sub { font-size: 9px; line-height: 0; }
.heavy { -webkit-text-stroke: 1px #dcdcdc; }
.off { font: 400 20px/22px "Liberation Serif", serif; color: #9a9a9a; margin-top: 11px; }
.off sup { font-size: 13px; }
.over { text-decoration: overline; }
.lang-row { display: grid; grid-template-columns: 143px 20px 83px; justify-content: space-between; align-items: center; margin-top: 8px; }
.panel .lang-row select { height: 23px; padding: 0 9px; }
.aa { font-size: 16px; line-height: 20px; white-space: nowrap; }
.aa sub { font-size: 16px; line-height: 0; }
```
